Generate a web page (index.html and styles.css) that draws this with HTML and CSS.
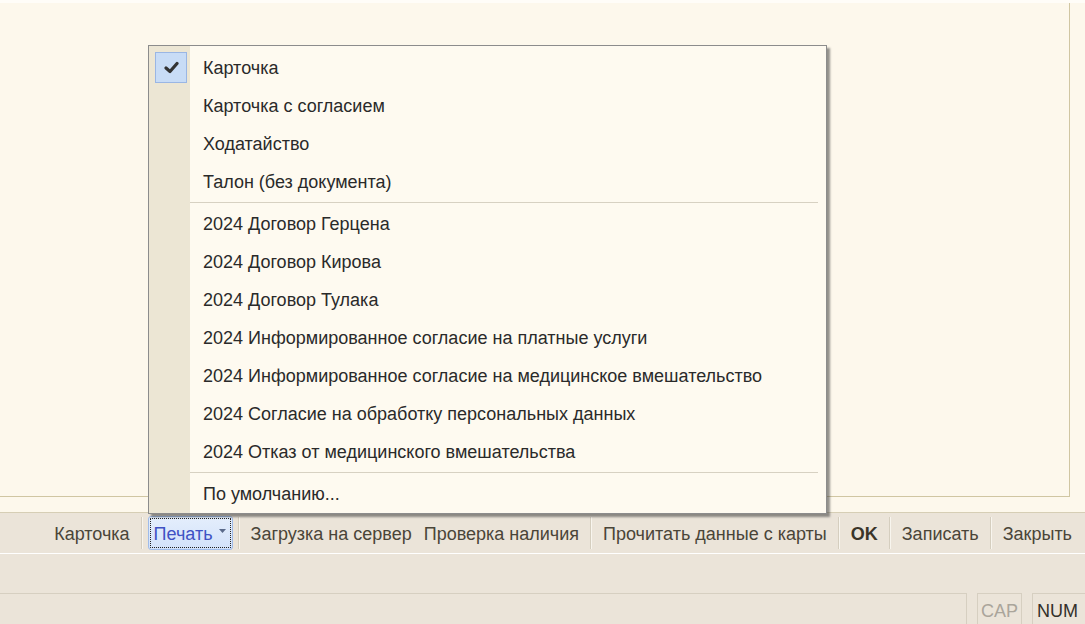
FILE: index.html
```html
<!DOCTYPE html>
<html lang="ru">
<head>
<meta charset="utf-8">
<title>Печать</title>
<link rel="stylesheet" href="styles.css">
</head>
<body>
<div class="page">
  <div class="content">
    <div class="topstrip"></div>
    <div class="panel"></div>
  </div>
  <div class="toolbar">
    <span class="tb-item">Карточка</span>
    <span class="sep"></span>
    <span class="tb-button">Печать<svg class="arrow" width="8" height="5" viewBox="0 0 8 5"><path d="M0 0H7L3.5 4Z" fill="#5a6a8a"/></svg></span>
    <span class="sep"></span>
    <span class="tb-item">Загрузка на сервер</span>
    <span class="tb-item">Проверка наличия</span>
    <span class="sep"></span>
    <span class="tb-item">Прочитать данные с карты</span>
    <span class="sep"></span>
    <span class="tb-item bold">OK</span>
    <span class="sep"></span>
    <span class="tb-item">Записать</span>
    <span class="sep"></span>
    <span class="tb-item">Закрыть</span>
  </div>
  <div class="middle"></div>
  <div class="statusbar">
    <div class="field main"></div>
    <div class="field cap">CAP</div>
    <div class="field num">NUM</div>
  </div>
</div>

<div class="menu">
  <div class="menu-item checked">
    <span class="check"><svg width="15" height="13" viewBox="0 0 15 13"><path d="M2 7L6 10.5L13 2.5" fill="none" stroke="#333" stroke-width="3.2" stroke-linejoin="round" stroke-linecap="round"/></svg></span>
    Карточка
  </div>
  <div class="menu-item">Карточка с согласием</div>
  <div class="menu-item">Ходатайство</div>
  <div class="menu-item">Талон (без документа)</div>
  <div class="menu-sep"></div>
  <div class="menu-item">2024 Договор Герцена</div>
  <div class="menu-item">2024 Договор Кирова</div>
  <div class="menu-item">2024 Договор Тулака</div>
  <div class="menu-item">2024 Информированное согласие на платные услуги</div>
  <div class="menu-item">2024 Информированное согласие на медицинское вмешательство</div>
  <div class="menu-item">2024 Согласие на обработку персональных данных</div>
  <div class="menu-item">2024 Отказ от медицинского вмешательства</div>
  <div class="menu-sep"></div>
  <div class="menu-item">По умолчанию...</div>
</div>
</body>
</html>
```

FILE: styles.css
```css
html, body {
  margin: 0;
  padding: 0;
}
body {
  width: 1085px;
  height: 624px;
  overflow: hidden;
  background: #ebe4d9;
  font-family: "Liberation Sans", Arial, sans-serif;
  font-size: 18px;
  color: #2e2e2e;
  position: relative;
}
.page {
  display: flex;
  flex-direction: column;
  height: 624px;
}
.content {
  height: 512px;
  background: #fdf8ec;
  border-bottom: 1px solid #d6ceb5;
  display: flex;
  flex-direction: column;
}
.topstrip {
  height: 3px;
  background: #fffdf8;
}
.panel {
  width: 1069px;
  height: 493px;
  border-right: 1px solid #d0c6a2;
  border-bottom: 1px solid #d0c6a2;
}
.toolbar {
  box-sizing: border-box;
  height: 41px;
  padding-top: 3px;
  border-bottom: 1px solid #ffffff;
  display: flex;
  align-items: center;
  justify-content: flex-end;
  padding-right: 7px;
  color: #4a4538;
}
.tb-item {
  padding: 0 6px;
  white-space: nowrap;
}
.tb-item.bold {
  font-weight: bold;
  color: #3a3428;
}
.sep {
  width: 1px;
  height: 32px;
  background: #d5cebf;
  border-right: 1px solid #f8f5ee;
  margin: -3px 5px 0;
}
.tb-button {
  display: flex;
  align-items: center;
  box-sizing: border-box;
  height: 34px;
  margin-top: -3px;
  padding: 2px 5px 0;
  color: #3f52c4;
  background: linear-gradient(#e4eefc, #d3e2fa);
  border: 1px solid #9fbbe9;
  border-radius: 3px;
  outline: 1px dotted #222;
  outline-offset: -3px;
  white-space: nowrap;
}
.arrow {
  margin-left: 6px;
  margin-top: -6px;
}
.middle {
  height: 39px;
}
.statusbar {
  display: flex;
  gap: 10px;
  flex: 1;
}
.field {
  flex-shrink: 0;
  box-sizing: border-box;
  border: 1px solid #d6cfc1;
  border-bottom: none;
  display: flex;
  align-items: center;
  justify-content: center;
  padding-top: 4px;
}
.field.main {
  width: 967px;
  border-left: none;
}
.field.cap {
  width: 45px;
  color: #aaa59b;
}
.field.num {
  width: 62px;
  justify-content: flex-start;
  padding-left: 4px;
  color: #33302a;
}

/* Drop-down menu overlaying the form */
.menu {
  position: absolute;
  left: 148px;
  top: 45px;
  width: 677px;
  padding: 3px 0 0 0;
  background: linear-gradient(to right, #ece6d4 0, #ece6d4 41px, #fefaf0 41px);
  border: 1px solid #8c8c8c;
  box-shadow: 3px 3px 2px rgba(60, 60, 60, 0.55);
}
.menu-item {
  position: relative;
  height: 38px;
  line-height: 38px;
  padding-left: 54px;
  white-space: nowrap;
  color: #2a2a2a;
}
.check {
  position: absolute;
  left: 6px;
  top: 3px;
  width: 30px;
  height: 29px;
  background: #c8dcf6;
  border: 1px solid #9ab6e4;
  display: flex;
  align-items: center;
  justify-content: center;
}
.menu-sep {
  height: 4px;
  margin: 0 8px 0 41px;
  position: relative;
}
.menu-sep::before {
  content: "";
  position: absolute;
  left: 0;
  right: 0;
  top: 1px;
  height: 1px;
  background: #d7d1c2;
}
```
